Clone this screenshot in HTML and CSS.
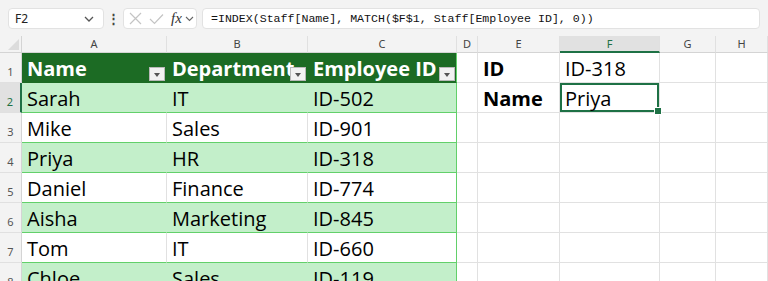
FILE: index.html
```html
<!DOCTYPE html>
<html lang="en">
<head>
  <meta charset="UTF-8">
  <title>Staff lookup</title>
  <link rel="stylesheet" href="styles.css">
</head>
<body>
  <div id="bar">
    <div class="namebox">
      <span>F2</span>
      <svg width="12" height="8" viewBox="0 0 12 8"><path d="M2 2l4 4 4-4" fill="none" stroke="#555" stroke-width="1.3"/></svg>
    </div>
    <div class="dots">⋮</div>
    <div class="fxbox">
      <svg class="x" width="13" height="13" viewBox="0 0 13 13"><path d="M1 1l11 11M12 1L1 12" stroke="#c4c4c4" stroke-width="1.2"/></svg>
      <svg class="ok" width="15" height="12" viewBox="0 0 15 12"><path d="M1 6l4.5 4.5L14 1.5" fill="none" stroke="#c4c4c4" stroke-width="1.2"/></svg>
      <span class="fx">fx</span>
      <svg width="9" height="6" viewBox="0 0 9 6"><path d="M1 1l3.5 3.5L8 1" fill="none" stroke="#666" stroke-width="1.1"/></svg>
    </div>
    <div class="formula">=INDEX(Staff[Name], MATCH($F$1, Staff[Employee ID], 0))</div>
  </div>

  <div id="sheet">
    <div class="corner"></div>
    <div class="ch">A</div><div class="ch">B</div><div class="ch">C</div><div class="ch">D</div>
    <div class="ch">E</div><div class="ch on">F</div><div class="ch">G</div><div class="ch">H</div>

    <div class="rh">1</div>
    <div class="c th">Name<i class="flt"></i></div>
    <div class="c th">Department<i class="flt"></i></div>
    <div class="c th last">Employee ID<i class="flt"></i></div>
    <div class="c"></div><div class="c bold">ID</div><div class="c">ID-318</div><div class="c"></div><div class="c"></div>

    <div class="rh on">2</div>
    <div class="c t b">Sarah</div><div class="c t b">IT</div><div class="c t b r">ID-502</div>
    <div class="c"></div><div class="c bold">Name</div><div class="c sel">Priya</div><div class="c"></div><div class="c"></div>

    <div class="rh">3</div>
    <div class="c t">Mike</div><div class="c t">Sales</div><div class="c t r">ID-901</div>
    <div class="c"></div><div class="c"></div><div class="c"></div><div class="c"></div><div class="c"></div>

    <div class="rh">4</div>
    <div class="c t b">Priya</div><div class="c t b">HR</div><div class="c t b r">ID-318</div>
    <div class="c"></div><div class="c"></div><div class="c"></div><div class="c"></div><div class="c"></div>

    <div class="rh">5</div>
    <div class="c t">Daniel</div><div class="c t">Finance</div><div class="c t r">ID-774</div>
    <div class="c"></div><div class="c"></div><div class="c"></div><div class="c"></div><div class="c"></div>

    <div class="rh">6</div>
    <div class="c t b">Aisha</div><div class="c t b">Marketing</div><div class="c t b r">ID-845</div>
    <div class="c"></div><div class="c"></div><div class="c"></div><div class="c"></div><div class="c"></div>

    <div class="rh">7</div>
    <div class="c t">Tom</div><div class="c t">IT</div><div class="c t r">ID-660</div>
    <div class="c"></div><div class="c"></div><div class="c"></div><div class="c"></div><div class="c"></div>

    <div class="rh">8</div>
    <div class="c t b">Chloe</div><div class="c t b">Sales</div><div class="c t b r">ID-119</div>
    <div class="c"></div><div class="c"></div><div class="c"></div><div class="c"></div><div class="c"></div>
  </div>
</body>
</html>
```

FILE: styles.css
```css
:root{
  --chrome:#f3f3f3;
  --grid:#e1e1e1;
  --head:#1c6b24;
  --band:#c3efca;
  --line:#62d06a;
  --sel:#1e7145;
}
*{box-sizing:border-box;margin:0}
html,body{height:100%;overflow:hidden}
body{background:#fff;font-family:"Open Sans",sans-serif;color:#000}

#bar{height:36px;background:var(--chrome);display:flex;align-items:flex-start;padding:8px 8px 0}
.namebox{width:96px;height:21px;background:#fff;border:1px solid #e2e2e2;border-radius:4px;display:flex;align-items:center;justify-content:space-between;padding:0 8px 0 6px;font-family:"Noto Sans",sans-serif;font-size:12px;color:#222}
.dots{width:19px;text-align:center;font-size:13px;line-height:21px;color:#444;font-weight:700}
.fxbox{width:74px;height:21px;background:#fff;border:1px solid #e2e2e2;border-radius:4px;display:flex;align-items:center;padding:0 0 0 5px}
.fxbox .x{margin-right:7px}
.fxbox .ok{margin-right:7px}
.fx{font-family:"Liberation Serif",serif;font-style:italic;font-size:15px;color:#333;line-height:1;margin-right:3px}
.formula{flex:1;margin-left:5px;height:21px;background:#fff;border:1px solid #e2e2e2;border-radius:4px;padding-left:8px;font-family:"Liberation Mono",monospace;font-size:11.6px;line-height:19px;color:#111}

#sheet{display:grid;grid-template-columns:22px 145px 141px 149px 21px 82px 100px 56px 52px;grid-template-rows:17px repeat(8,30px)}
.corner{background:var(--chrome);border-right:1px solid #d4d4d4;border-bottom:1px solid #d4d4d4;position:relative}
.corner::after{content:"";position:absolute;right:2px;bottom:2px;border-left:11px solid transparent;border-bottom:11px solid #dcdcdc}
.ch{background:var(--chrome);border-right:1px solid #e0e0e0;border-bottom:1px solid #d4d4d4;font-family:"Noto Sans",sans-serif;font-size:11px;line-height:16px;text-align:center;color:#444}
.ch.on{background:#e1e1e1;border-bottom:2px solid var(--sel);color:var(--sel)}
.rh{background:var(--chrome);border-right:1px solid #d4d4d4;border-bottom:1px solid #e0e0e0;font-family:"Noto Sans",sans-serif;font-size:11px;color:#555;display:flex;align-items:flex-end;justify-content:center;padding-bottom:3px}
.rh.on{background:#e1e1e1;border-right:2px solid var(--sel);color:var(--sel)}

.c{border-right:1px solid var(--grid);border-bottom:1px solid var(--grid);font-size:20px;line-height:24px;padding:0 4px 1px 5px;display:flex;align-items:flex-end;white-space:nowrap;overflow:hidden}
.bold{font-weight:700}
.th{background:var(--head);border-right-color:var(--head);border-bottom-color:var(--head);color:#fff;font-weight:700;position:relative;padding-left:5px}
.th.last{border-right:1px solid var(--line)}
.t{border-bottom:1px solid var(--line)}
.b{background:var(--band);border-right-color:var(--band)}
.r{border-right:1px solid var(--line)}
.flt{position:absolute;right:1px;bottom:1px;width:16px;height:14px;background:#f2f2f2;border:1px solid #b9b9b9}
.flt::after{content:"";position:absolute;left:4px;top:5px;border-left:3.5px solid transparent;border-right:3.5px solid transparent;border-top:4px solid #555}
.sel{box-shadow:inset 0 0 0 2px var(--sel);position:relative;overflow:visible}
.sel::after{content:"";position:absolute;right:-3px;bottom:-3px;width:6px;height:6px;background:var(--sel);border:1px solid #fff}
```
